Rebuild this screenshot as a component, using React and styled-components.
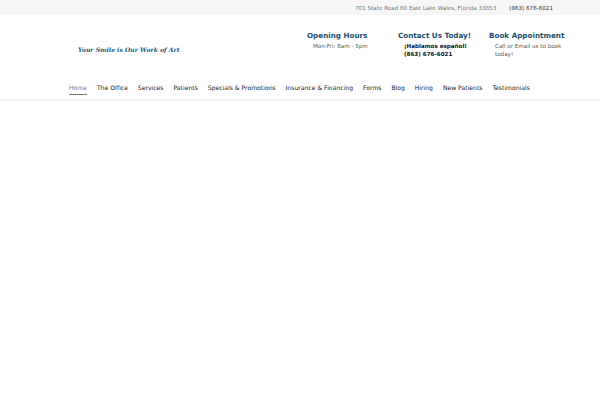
import React from 'react';
import styled, { createGlobalStyle } from 'styled-components';

const GlobalStyle = createGlobalStyle`
  html, body {
    margin: 0;
    padding: 0;
    background: #fff;
    font-family: 'DejaVu Sans', Verdana, sans-serif;
  }
`;

const navItems = [
  'Home',
  'The Office',
  'Services',
  'Patients',
  'Specials & Promotions',
  'Insurance & Financing',
  'Forms',
  'Blog',
  'Hiring',
  'New Patients',
  'Testimonials',
];

const App = () => {
  return (
    <Page>
      <GlobalStyle />
      <TopBar>
        <TopText>701 State Road 60 East Lake Wales, Florida 33853</TopText>
        <TopText $dark>(863) 676-6021</TopText>
      </TopBar>
      <Header>
        <HeaderRow>
          <Tagline>Your Smile is Our Work of Art</Tagline>
          <InfoGroup>
            <InfoBox>
              <InfoTitle>Opening Hours</InfoTitle>
              <InfoText>Mon-Fri: 8am - 5pm</InfoText>
            </InfoBox>
            <InfoBox>
              <InfoTitle>Contact Us Today!</InfoTitle>
              <InfoText $bold>
                ¡Hablamos español!
                <br />
                (863) 676-6021
              </InfoText>
            </InfoBox>
            <InfoBox>
              <InfoTitle>Book Appointment</InfoTitle>
              <InfoText>
                Call or Email us to book
                <br />
                today!
              </InfoText>
            </InfoBox>
          </InfoGroup>
        </HeaderRow>
        <Nav>
          {navItems.map((item, i) => (
            <NavItem key={item} $active={i === 0}>
              {item}
            </NavItem>
          ))}
        </Nav>
      </Header>
    </Page>
  );
};

export default App;

const Page = styled.div`
  width: 600px;
  height: 400px;
  background: #fff;
`;

const TopBar = styled.div`
  height: 15px;
  background: #f6f6f6;
  display: flex;
  justify-content: flex-end;
  align-items: center;
  gap: 13px;
  padding-right: 47px;
`;

const TopText = styled.span`
  font-size: 5.6px;
  color: ${(p) => (p.$dark ? '#333' : '#777')};
`;

const Header = styled.div`
  height: 84px;
  border-bottom: 1px solid #f0f0f0;
  box-shadow: 0 1px 2px rgba(0, 0, 0, 0.04);
`;

const HeaderRow = styled.div`
  display: flex;
  justify-content: space-between;
  padding: 16px 20px 0 78px;
  height: 55px;
  box-sizing: border-box;
`;

const Tagline = styled.div`
  font-family: 'DejaVu Serif', 'Liberation Serif', serif;
  font-style: italic;
  font-weight: bold;
  font-size: 6.1px;
  color: #1f5b80;
  margin-top: 15px;
`;

const InfoGroup = styled.div`
  display: grid;
  grid-template-columns: repeat(3, 91px);
`;

const InfoBox = styled.div`
  display: flex;
  flex-direction: column;
`;

const InfoTitle = styled.div`
  font-size: 7.2px;
  font-weight: bold;
  color: #1b4f6f;
  margin-bottom: 2px;
`;

const InfoText = styled.div`
  font-size: 5.6px;
  line-height: 8px;
  padding-left: 6px;
  color: ${(p) => (p.$bold ? '#111' : '#555')};
  font-weight: ${(p) => (p.$bold ? 'bold' : 'normal')};
`;

const Nav = styled.nav`
  display: flex;
  gap: 9.9px;
  padding-left: 69px;
  margin-top: 14px;
`;

const NavItem = styled.a`
  font-size: 6.1px;
  color: ${(p) => (p.$active ? '#777' : '#222')};
  padding-bottom: 3px;
  border-bottom: 1px solid ${(p) => (p.$active ? '#777' : 'transparent')};
  cursor: pointer;
`;
